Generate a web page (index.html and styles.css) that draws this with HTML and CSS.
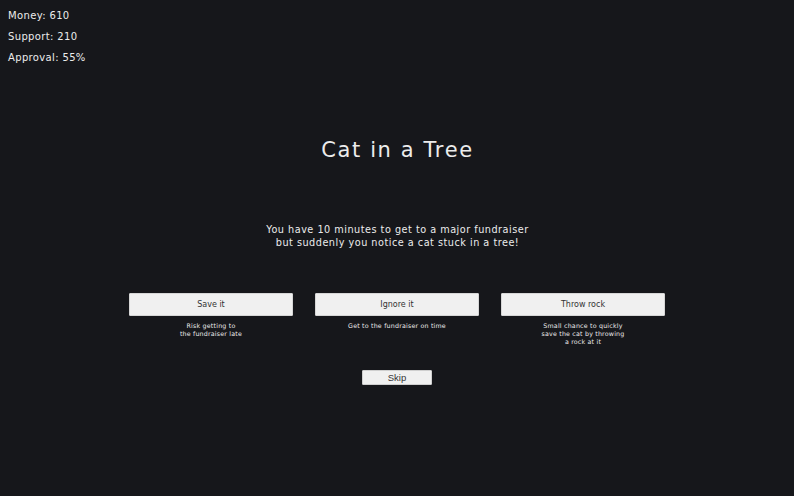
FILE: index.html
```html
<!DOCTYPE html>
<html>
<head>
<meta charset="utf-8">
<link rel="stylesheet" href="styles.css">
</head>
<body>
<div class="stats">
  <div class="stat">Money: 610</div>
  <div class="stat">Support: 210</div>
  <div class="stat">Approval: 55%</div>
</div>
<main class="event">
  <h1 class="title">Cat in a Tree</h1>
  <p class="desc">You have 10 minutes to get to a major fundraiser<br>but suddenly you notice a cat stuck in a tree!</p>
  <div class="choices">
    <div class="choice">
      <button class="choice-btn">Save it</button>
      <div class="choice-note">Risk getting to<br>the fundraiser late</div>
    </div>
    <div class="choice">
      <button class="choice-btn">Ignore it</button>
      <div class="choice-note">Get to the fundraiser on time</div>
    </div>
    <div class="choice">
      <button class="choice-btn">Throw rock</button>
      <div class="choice-note">Small chance to quickly<br>save the cat by throwing<br>a rock at it</div>
    </div>
  </div>
  <button class="skip">Skip</button>
</main>
</body>
</html>
```

FILE: styles.css
```css
html, body {
  margin: 0;
  padding: 0;
  background: #16171b;
  color: #ececec;
  font-family: "DejaVu Sans", sans-serif;
  height: 100%;
}
.stats {
  padding: 5px 8px 0;
}
.stat {
  font-size: 10px;
  line-height: 21px;
  height: 21px;
  letter-spacing: 0.35px;
}
.event {
  display: flex;
  flex-direction: column;
  align-items: center;
}
.title {
  margin: 70px 0 0;
  font-size: 21px;
  font-weight: normal;
  line-height: 24px;
  height: 24px;
  letter-spacing: 1.6px;
  padding-left: 1px;
}
.desc {
  margin: 61px 0 0;
  font-size: 9.7px;
  line-height: 13px;
  text-align: center;
  letter-spacing: 0.5px;
  padding-left: 1px;
}
.choices {
  margin-top: 44px;
  display: flex;
  gap: 22px;
  align-items: flex-start;
}
.choice {
  width: 164px;
  display: flex;
  flex-direction: column;
  align-items: center;
}
.choice-btn {
  width: 164px;
  height: 23px;
  background: #f0f0f0;
  border: 1px solid #d6d6d6;
  border-radius: 1px;
  color: #333;
  font-family: "DejaVu Sans", sans-serif;
  font-size: 8px;
  padding: 0;
  margin: 0;
}
.choice-note {
  margin-top: 6px;
  font-size: 6.3px;
  line-height: 8px;
  text-align: center;
  letter-spacing: 0.2px;
}
.skip {
  margin-top: 24px;
  width: 70px;
  height: 15px;
  background: #f0f0f0;
  border: 1px solid #cfcfcf;
  border-radius: 1px;
  color: #333;
  font-family: "Liberation Sans", sans-serif;
  font-size: 9.5px;
  padding: 0;
  line-height: 13px;
}
```
